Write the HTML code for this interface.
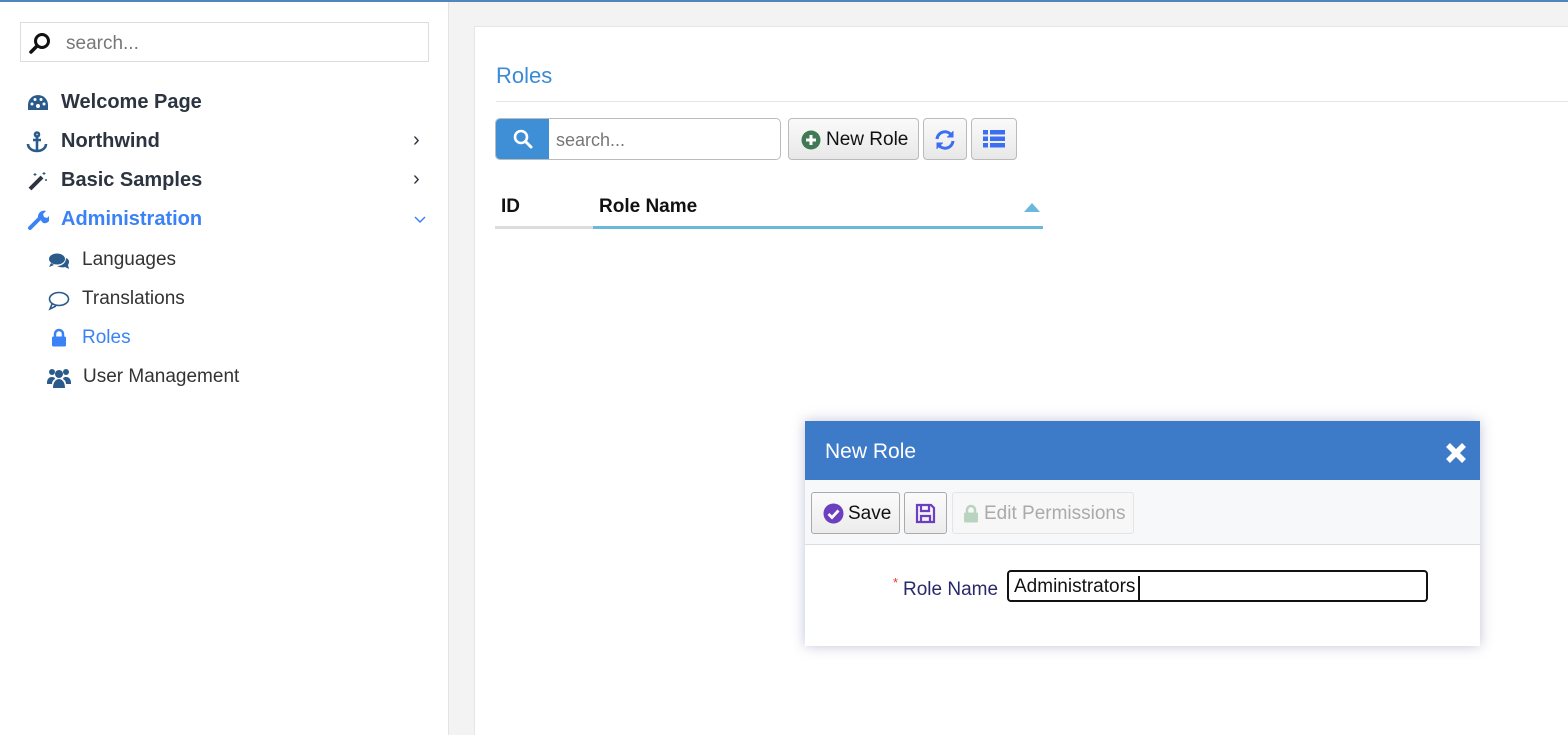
<!DOCTYPE html>
<html style="width:1568px;height:735px;overflow:hidden"><head><meta charset="utf-8"><style>
*{box-sizing:border-box;margin:0;padding:0}
body{width:1568px;height:735px;overflow:hidden;font-family:"Segoe UI","Liberation Sans",sans-serif;background:#f3f3f3;position:relative;color:#333}
.top{position:absolute;left:0;top:0;width:1568px;height:2px;background:#4f87b8}
.side{position:absolute;left:0;top:2px;width:449px;height:733px;background:#fff;border-right:1px solid #e4e4e4}
.ssearch{position:absolute;left:20px;top:20px;width:409px;height:40px;border:1px solid #ddd;font-size:19px;color:#777;padding:10px 0 0 45px}
.nav{position:absolute;font-size:20px;font-weight:600;color:#2b3440}
.sub{position:absolute;font-size:19px;color:#333}
.ic{position:absolute}
.panel{position:absolute;left:474px;top:26px;width:1100px;height:709px;background:#fff;border:1px solid #e6e6e6;border-bottom:none}
.btn{position:absolute;top:118px;height:42px;border:1px solid #bbb;border-radius:4px;background:linear-gradient(#fafafa,#e8e8e8)}
.dlg{position:absolute;left:805px;top:421px;width:675px;height:225px;background:#fff;box-shadow:0 0 12px rgba(80,80,140,.35)}
</style></head><body>
<div class="top"></div>
<div class="side">
<div class="ssearch">search...</div>
<svg class="ic" style="left:29px;top:30px" width="22" height="22" viewBox="0 0 22 22"><circle cx="13" cy="9" r="6.5" fill="none" stroke="#111" stroke-width="3"/><path d="M8 14L2 20" stroke="#111" stroke-width="3.5" stroke-linecap="round"/></svg>
<svg class="ic" style="left:27px;top:92px" width="22" height="18" viewBox="0 0 22 18"><path d="M11 1A10 10 0 0 0 1 11v5h20v-5A10 10 0 0 0 11 1z" fill="#2b5b8a"/><circle cx="11" cy="12" r="2" fill="#fff"/><circle cx="5" cy="10" r="1.5" fill="#fff"/><circle cx="17" cy="10" r="1.5" fill="#fff"/><circle cx="8" cy="5.5" r="1.5" fill="#fff"/><circle cx="14" cy="5.5" r="1.5" fill="#fff"/></svg>
<div class="nav" style="left:61px;top:89px">Welcome Page</div>
<svg class="ic" style="left:26px;top:129px" width="22" height="22" viewBox="0 0 22 22" fill="none" stroke="#2b5b8a" stroke-width="2.6"><circle cx="11" cy="3.5" r="2"/><path d="M11 6v14M7 9h8M2 13c0 4 4 7 9 7s9-3 9-7"/></svg>
<div class="nav" style="left:61px;top:128px">Northwind</div>
<div class="nav" style="left:413px;top:127px;font-weight:400">›</div>
<svg class="ic" style="left:27px;top:168px" width="22" height="22" viewBox="0 0 22 22"><path d="M3 19L15 7" stroke="#2b3440" stroke-width="4"/><path d="M8 3v3M6.5 4.5h3M17 2v3M15.5 3.5h3M19 9v2M18 10h2" stroke="#2b5b8a" stroke-width="1"/></svg>
<div class="nav" style="left:61px;top:167px">Basic Samples</div>
<div class="nav" style="left:413px;top:166px;font-weight:400">›</div>
<svg class="ic" style="left:27px;top:207px" width="22" height="22" viewBox="0 0 22 22"><path d="M3 19L12 10" stroke="#3b82f6" stroke-width="4" stroke-linecap="round"/><path d="M11 8a6 6 0 0 1 8-6l-3 3 1 3 3 1 3-3a6 6 0 0 1-7 8z" fill="#3b82f6"/></svg>
<div class="nav" style="left:61px;top:206px;color:#3b82f6">Administration</div>
<svg class="ic" style="left:413px;top:213px" width="14" height="10" viewBox="0 0 14 10"><path d="M2 2l5 5 5-5" stroke="#3b82f6" stroke-width="1.5" fill="none"/></svg>
<svg class="ic" style="left:48px;top:250px" width="22" height="18" viewBox="0 0 22 18"><ellipse cx="9" cy="7" rx="8" ry="5.5" fill="#2b5b8a"/><path d="M3 11l-2 4 5-2z" fill="#2b5b8a"/><path d="M18 6c3 1 4 4 2 7l1 4-4-2c-3 1-6 0-8-1 5 0 9-3 9-8z" fill="#2b5b8a"/></svg>
<div class="sub" style="left:82px;top:247px">Languages</div>
<svg class="ic" style="left:48px;top:289px" width="22" height="20" viewBox="0 0 22 20"><ellipse cx="11" cy="8" rx="9.5" ry="6.5" fill="none" stroke="#2b5b8a" stroke-width="1.6"/><path d="M4 13l-2 5 6-3" fill="none" stroke="#2b5b8a" stroke-width="1.6"/></svg>
<div class="sub" style="left:82px;top:286px">Translations</div>
<svg class="ic" style="left:51px;top:326px" width="16" height="20" viewBox="0 0 16 20"><path d="M4 9V6a4 4 0 0 1 8 0v3" fill="none" stroke="#3b82f6" stroke-width="2.5"/><rect x="1" y="8.5" width="14" height="10" rx="1.5" fill="#3b82f6"/></svg>
<div class="sub" style="left:82px;top:325px;color:#3b82f6">Roles</div>
<svg class="ic" style="left:47px;top:365px" width="24" height="22" viewBox="0 0 24 22" fill="#2b5b8a"><circle cx="5" cy="5" r="3"/><circle cx="19" cy="5" r="3"/><circle cx="12" cy="7" r="4"/><path d="M0 16c0-4 2-6 5-6 2 0 3 1 3 2-2 1-3 3-3 5H0zM24 16c0-4-2-6-5-6-2 0-3 1-3 2 2 1 3 3 3 5h5zM6 21c0-6 3-9 6-9s6 3 6 9z"/></svg>
<div class="sub" style="left:83px;top:364px">User Management</div>
</div>
<div class="panel"></div>
<div style="position:absolute;left:496px;top:63px;font-size:22px;color:#3b8ad6">Roles</div>
<div style="position:absolute;left:496px;top:101px;width:1072px;height:1px;background:#e4e4e4"></div>
<div style="position:absolute;left:495px;top:118px;width:286px;height:42px;border:1px solid #bbb;border-radius:5px;background:#fff;overflow:hidden">
<div style="position:absolute;left:0;top:0;width:53px;height:42px;background:#3f8fd6"></div>
<svg style="position:absolute;left:16px;top:9px" width="22" height="22" viewBox="0 0 22 22"><circle cx="9" cy="9" r="6" fill="none" stroke="#fff" stroke-width="2.6"/><path d="M13.5 13.5L19 19" stroke="#fff" stroke-width="3" stroke-linecap="round"/></svg>
<div style="position:absolute;left:60px;top:11px;font-size:18px;color:#777">search...</div></div>
<div class="btn" style="left:788px;width:131px"><svg style="position:absolute;left:12px;top:11px" width="20" height="20" viewBox="0 0 20 20"><circle cx="10" cy="10" r="9.5" fill="#3f7a55"/><path d="M10 5v10M5 10h10" stroke="#fff" stroke-width="3"/></svg><div style="position:absolute;left:37px;top:10px;font-size:19px;color:#111">New Role</div></div>
<div class="btn" style="left:923px;width:44px"><svg style="position:absolute;left:10px;top:10px" width="22" height="22" viewBox="0 0 22 22" fill="none" stroke="#3b6ef0" stroke-width="3"><path d="M3 10a8 8 0 0 1 15-3M19 12a8 8 0 0 1-15 3"/><path d="M19 2v6h-6M3 20v-6h6" fill="#3b6ef0" stroke-width="1"/></svg></div>
<div class="btn" style="left:971px;width:46px"><svg style="position:absolute;left:11px;top:11px" width="22" height="18" viewBox="0 0 22 18" fill="#3b6ef0"><rect x="0" y="0" width="5" height="4.5"/><rect x="7" y="0" width="15" height="4.5"/><rect x="0" y="6.5" width="5" height="4.5"/><rect x="7" y="6.5" width="15" height="4.5"/><rect x="0" y="13" width="5" height="4.5"/><rect x="7" y="13" width="15" height="4.5"/></svg></div>
<div style="position:absolute;left:501px;top:196px;font-size:19px;font-weight:600;color:#111">ID</div>
<div style="position:absolute;left:599px;top:196px;font-size:19px;font-weight:600;color:#111">Role Name</div>
<svg style="position:absolute;left:1024px;top:203px" width="16" height="9"><path d="M0 9L8 0l8 9z" fill="#6cb8dc"/></svg>
<div style="position:absolute;left:495px;top:226px;width:98px;height:3px;background:#ddd"></div>
<div style="position:absolute;left:593px;top:226px;width:450px;height:3px;background:#6cb8dc"></div>
<div class="dlg">
<div style="position:absolute;left:0;top:0;width:675px;height:59px;background:#3d7bc8"></div>
<div style="position:absolute;left:20px;top:19px;font-size:21px;color:#fff">New Role</div>
<svg style="position:absolute;left:640px;top:21px" width="22" height="22" viewBox="0 0 22 22"><path d="M3 3l16 16M19 3L3 19" stroke="#fff" stroke-width="5.5"/></svg>
<div style="position:absolute;left:0;top:59px;width:675px;height:65px;background:#f7f8fa;border-bottom:1px solid #ddd"></div>
<div style="position:absolute;left:6px;top:71px;width:89px;height:42px;border:1px solid #aaa;border-radius:3px;background:linear-gradient(#fbfbfb,#ececec)"><svg style="position:absolute;left:11px;top:10px" width="21" height="21" viewBox="0 0 21 21"><circle cx="10.5" cy="10.5" r="10" fill="#6b3fbf"/><path d="M5.5 11l3.5 3.5 6.5-7" stroke="#fff" stroke-width="2.8" fill="none"/></svg><div style="position:absolute;left:36px;top:10px;font-size:19px;color:#111">Save</div></div>
<div style="position:absolute;left:99px;top:71px;width:43px;height:42px;border:1px solid #aaa;border-radius:3px;background:linear-gradient(#fbfbfb,#ececec)"><svg style="position:absolute;left:10px;top:10px" width="21" height="21" viewBox="0 0 21 21" fill="none" stroke="#6b3fbf" stroke-width="2.2"><path d="M2 2h14l3 3v14H2z"/><path d="M6 2v6h8V2M6 19v-6h9v6"/></svg></div>
<div style="position:absolute;left:147px;top:71px;width:182px;height:42px;border:1px solid #e4e4e4;border-radius:3px;background:#f7f7f7"><svg style="position:absolute;left:10px;top:11px" width="16" height="20" viewBox="0 0 16 20"><path d="M4 9V6a4 4 0 0 1 8 0v3" fill="none" stroke="#b8d4c0" stroke-width="2.5"/><rect x="1" y="8.5" width="14" height="10" rx="1.5" fill="#b8d4c0"/></svg><div style="position:absolute;left:31px;top:10px;font-size:19px;color:#aaa">Edit Permissions</div></div>
<div style="position:absolute;left:88px;top:154px;font-size:13px;color:#e33">*</div>
<div style="position:absolute;left:98px;top:158px;font-size:19px;color:#2a2a6a">Role Name</div>
<div style="position:absolute;left:202px;top:149px;width:421px;height:32px;border:2.5px solid #111;border-radius:4px"></div>
<div style="position:absolute;left:209px;top:155px;font-size:19px;color:#111">Administrators</div>
<div style="position:absolute;left:333px;top:155px;width:2px;height:24px;background:#111"></div>
</div>
</body></html>
